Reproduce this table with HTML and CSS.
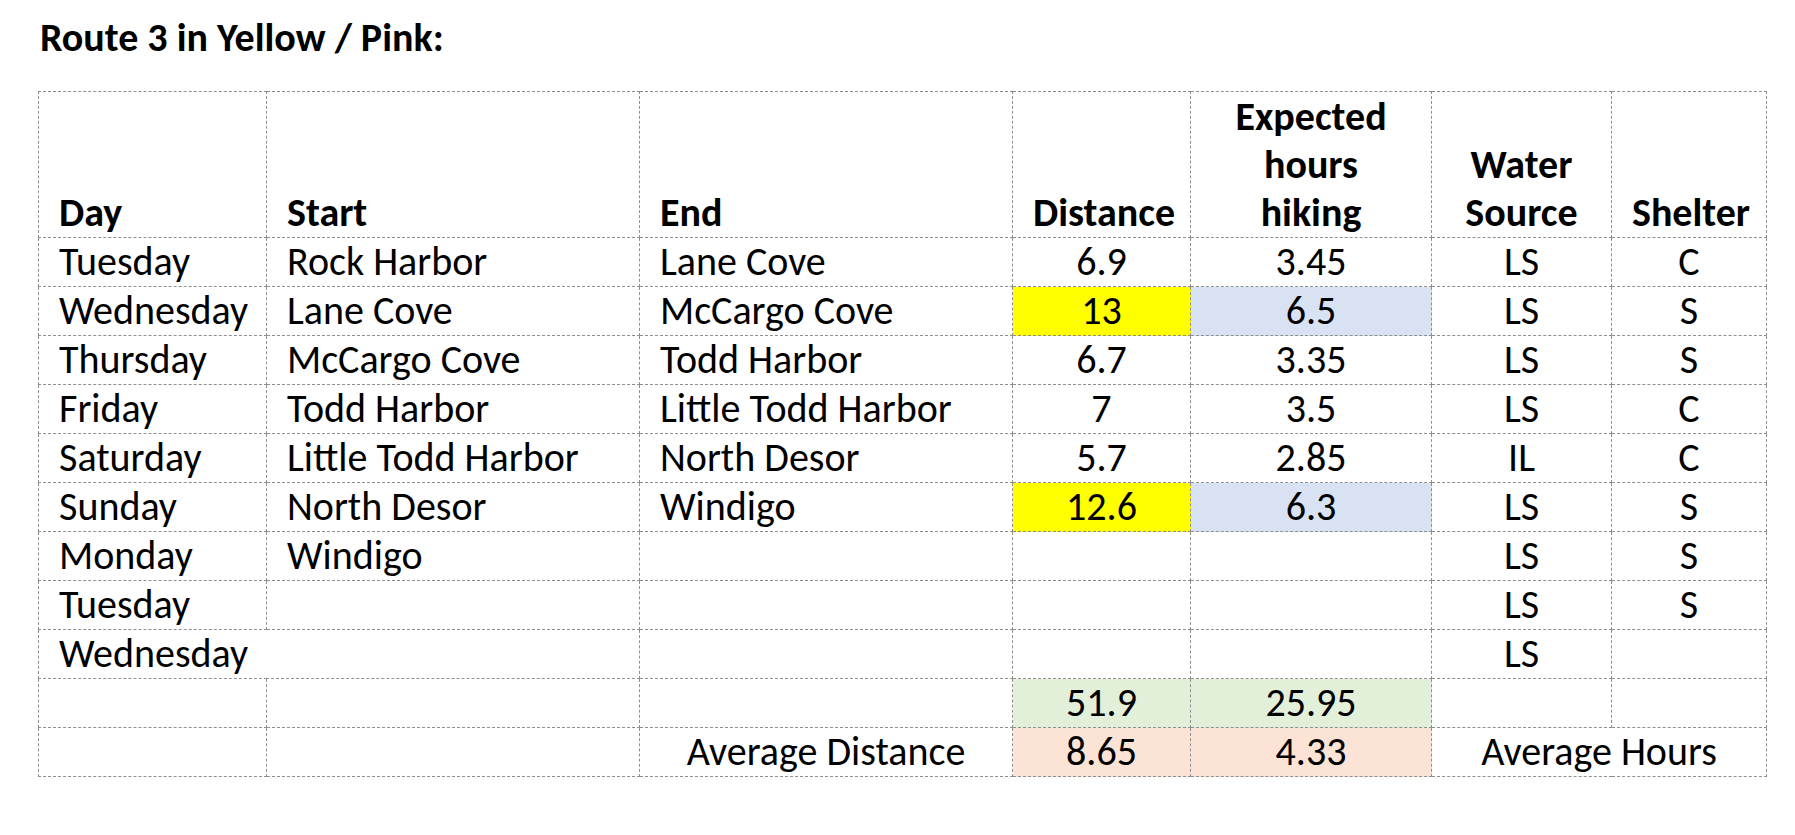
FILE: index.html
```html
<!DOCTYPE html>
<html lang="en">
<head>
<meta charset="utf-8">
<title>Route 3 in Yellow / Pink</title>
<link rel="stylesheet" href="styles.css">
</head>
<body>
<main class="page">
  <h1 class="title">Route 3 in Yellow / Pink:</h1>
  <table class="route">
    <colgroup>
      <col class="c-day">
      <col class="c-start">
      <col class="c-end">
      <col class="c-dist">
      <col class="c-hours">
      <col class="c-water">
      <col class="c-shelter">
    </colgroup>
    <thead>
      <tr class="head">
        <th>Day</th>
        <th>Start</th>
        <th>End</th>
        <th class="ctr">Distance</th>
        <th class="ctr">Expected<br>hours<br>hiking</th>
        <th class="ctr">Water<br>Source</th>
        <th class="ctr">Shelter</th>
      </tr>
    </thead>
    <tbody>
      <tr><td>Tuesday</td><td>Rock Harbor</td><td>Lane Cove</td><td class="ctr">6.9</td><td class="ctr">3.45</td><td class="ctr">LS</td><td class="ctr">C</td></tr>
      <tr><td>Wednesday</td><td>Lane Cove</td><td>McCargo Cove</td><td class="ctr yellow">13</td><td class="ctr blue">6.5</td><td class="ctr">LS</td><td class="ctr">S</td></tr>
      <tr><td>Thursday</td><td>McCargo Cove</td><td>Todd Harbor</td><td class="ctr">6.7</td><td class="ctr">3.35</td><td class="ctr">LS</td><td class="ctr">S</td></tr>
      <tr><td>Friday</td><td>Todd Harbor</td><td>Little Todd Harbor</td><td class="ctr">7</td><td class="ctr">3.5</td><td class="ctr">LS</td><td class="ctr">C</td></tr>
      <tr><td>Saturday</td><td>Little Todd Harbor</td><td>North Desor</td><td class="ctr">5.7</td><td class="ctr">2.85</td><td class="ctr">IL</td><td class="ctr">C</td></tr>
      <tr><td>Sunday</td><td>North Desor</td><td>Windigo</td><td class="ctr yellow">12.6</td><td class="ctr blue">6.3</td><td class="ctr">LS</td><td class="ctr">S</td></tr>
      <tr><td>Monday</td><td>Windigo</td><td></td><td></td><td></td><td class="ctr">LS</td><td class="ctr">S</td></tr>
      <tr><td>Tuesday</td><td></td><td></td><td></td><td></td><td class="ctr">LS</td><td class="ctr">S</td></tr>
      <tr><td colspan="2">Wednesday</td><td></td><td></td><td></td><td class="ctr">LS</td><td></td></tr>
      <tr><td></td><td></td><td></td><td class="ctr green">51.9</td><td class="ctr green">25.95</td><td></td><td></td></tr>
      <tr><td></td><td></td><td class="ctr">Average Distance</td><td class="ctr peach">8.65</td><td class="ctr peach">4.33</td><td class="ctr" colspan="2">Average Hours</td></tr>
    </tbody>
  </table>
</main>
</body>
</html>
```

FILE: styles.css
```css
html, body {
  margin: 0;
  padding: 0;
  background: #ffffff;
}

body {
  font-family: Carlito, "Lato", "Liberation Sans", sans-serif;
  font-size: 40px;
  color: #000000;
}

.page {
  padding: 16px 0 0 38px;
}

.title {
  margin: 0 0 32px 2px;
  font-size: 40px;
  font-weight: 700;
  line-height: 43px;
}

.route {
  border-collapse: collapse;
  table-layout: fixed;
  width: 1728px;
}

.c-day { width: 228px; }
.c-start { width: 373px; }
.c-end { width: 373px; }
.c-dist { width: 178px; }
.c-hours { width: 241px; }
.c-water { width: 180px; }
.c-shelter { width: 155px; }

.route th,
.route td {
  border: 1px dashed #8f8f8f;
  padding: 0 20px;
  line-height: 48px;
  text-align: left;
  white-space: nowrap;
  overflow: visible;
}

.route th {
  font-weight: 700;
  vertical-align: bottom;
  height: 145px;
  padding-bottom: 0;
}

.route td {
  height: 48px;
  vertical-align: top;
}

.route .ctr {
  text-align: center;
}

.yellow { background: #ffff00; }
.blue { background: #d9e2f3; }
.green { background: #e2efd9; }
.peach { background: #fbe4d5; }
```
